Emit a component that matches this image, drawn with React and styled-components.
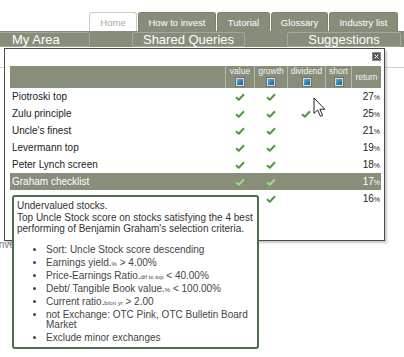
import React from "react";
import styled, { createGlobalStyle } from "styled-components";

const Global = createGlobalStyle`
  html, body { margin: 0; padding: 0; background: #fff; }
  body { font-family: "Liberation Sans", Arial, sans-serif; }
`;

const Page = styled.div`
  position: relative;
  width: 404px;
  height: 357px;
  overflow: hidden;
  background: #fff;
`;

const TabRow = styled.div`
  display: flex;
  justify-content: flex-end;
  align-items: flex-end;
  gap: 1px;
  height: 31px;
  padding-right: 6px;
  box-sizing: border-box;
`;

const Tab = styled.div`
  width: ${(p) => p.$w}px;
  height: 19px;
  box-sizing: border-box;
  display: flex;
  align-items: center;
  justify-content: center;
  font-size: 9.5px;
  border-radius: 3px 3px 0 0;
  border: 1px solid ${(p) => (p.$active ? "#c9ccc3" : "#7b836f")};
  border-bottom: none;
  background: ${(p) => (p.$active ? "#fff" : "#868e7a")};
  color: ${(p) => (p.$active ? "#a6aaa0" : "#fff")};
`;

const NavBar = styled.div`
  display: flex;
  align-items: center;
  height: 16px;
  background: #868e7a;
`;

const NavItem = styled.div`
  box-sizing: border-box;
  width: ${(p) => p.$w}px;
  margin-left: ${(p) => p.$ml || 0}px;
  height: 15px;
  display: flex;
  align-items: center;
  justify-content: ${(p) => (p.$left ? "flex-start" : "center")};
  padding-left: ${(p) => (p.$left ? 12 : 0)}px;
  font-size: 13px;
  color: #fff;
  border: 1px solid #a3a999;
  border-left: ${(p) => (p.$left ? "none" : "1px solid #a3a999")};
  border-radius: ${(p) => (p.$left ? "0 2px 2px 0" : "2px")};
`;

const BackLine = styled.div`
  margin-top: 20px;
  border-top: 1px solid #cfcfcf;
`;

const BackText = styled.div`
  margin-top: 171px;
  margin-left: -4px;
  font-size: 10px;
  color: #777;
`;

const Popup = styled.div`
  position: absolute;
  left: 4px;
  top: 48px;
  width: 381px;
  height: 193px;
  box-sizing: border-box;
  border: 1px solid #4a4a4a;
  box-shadow: 2px 2px 2px rgba(0, 0, 0, 0.22);
  background: #fff;
  padding: 0 3px 0 5px;
`;

const CloseRow = styled.div`
  height: 17px;
  display: flex;
  justify-content: flex-end;
  align-items: center;
`;

const CloseBtn = styled.div`
  width: 7px;
  height: 7px;
  margin-top: -2px;
  background: #555;
  border: 1px solid #888;
  display: flex;
  align-items: center;
  justify-content: center;
`;

const COLS = "215px 29px 33px 38px 26px 30px";

const HeaderRow = styled.div`
  display: grid;
  grid-template-columns: ${COLS};
  height: 22px;
  background: #878f7b;
`;

const HeadCell = styled.div`
  border-left: ${(p) => (p.$first ? "none" : "1px solid #b4b9ab")};
  display: flex;
  flex-direction: column;
  align-items: center;
  justify-content: ${(p) => (p.$center ? "center" : "flex-start")};
  font-size: 8.5px;
  line-height: 9px;
  color: #f3f3f3;
  padding-top: ${(p) => (p.$center ? 0 : 1)}px;
  box-sizing: border-box;
`;

const Box = styled.div`
  width: 6px;
  height: 6px;
  margin-top: 2px;
  border: 1px solid #d8dde0;
  background: linear-gradient(135deg, #5aa9e0, #1c5f9c);
  box-shadow: 0 0 0 1px #6d7565;
`;

const Row = styled.div`
  display: grid;
  grid-template-columns: ${COLS};
  height: 17px;
  align-items: center;
  background: ${(p) => (p.$sel ? "#878f7b" : "transparent")};
  color: ${(p) => (p.$sel ? "#fff" : "#222")};
  font-size: 10px;
`;

const NameCell = styled.div`
  padding-left: 2px;
`;

const CheckCell = styled.div`
  display: flex;
  justify-content: center;
  align-items: center;
`;

const ReturnCell = styled.div`
  text-align: right;
  padding-right: 1px;
`;

const Pct = styled.span`
  font-size: 7px;
`;

const Tooltip = styled.div`
  position: absolute;
  left: 12px;
  top: 195px;
  width: 247px;
  height: 154px;
  box-sizing: border-box;
  background: #fff;
  border: 2px solid #4d6c50;
  border-radius: 3px;
  padding: 3px 0 3px 3px;
  font-size: 10px;
  color: #333;
`;

const Intro = styled.div`
  line-height: 11.5px;
`;

const List = styled.ul`
  margin: 10px 0 0 0;
  padding-left: 29px;
  color: #444;
`;

const Item = styled.li`
  line-height: 10px;
  margin-bottom: 3px;
`;

const Unit = styled.span`
  font-size: 6px;
  line-height: 0;
`;

const Cursor = styled.svg`
  position: absolute;
  left: 313px;
  top: 97px;
`;

const Check = ({ sel }) => (
  <svg width="10" height="8" viewBox="0 0 10 8">
    <polyline
      points="1,4.2 3.8,6.8 9,1.2"
      fill="none"
      stroke={sel ? "#9fd98c" : "#4f9a3f"}
      strokeWidth="2"
      strokeLinejoin="round"
    />
  </svg>
);

const rows = [
  { name: "Piotroski top", c: [1, 1, 0, 0], r: 27 },
  { name: "Zulu principle", c: [1, 1, 1, 0], r: 25 },
  { name: "Uncle's finest", c: [1, 1, 0, 0], r: 21 },
  { name: "Levermann top", c: [1, 1, 0, 0], r: 19 },
  { name: "Peter Lynch screen", c: [1, 1, 0, 0], r: 18 },
  { name: "Graham checklist", c: [1, 1, 0, 0], r: 17, sel: true },
  { name: "", c: [0, 1, 0, 0], r: 16 },
];

const tabs = [
  { t: "Home", w: 48, active: true },
  { t: "How to invest", w: 78 },
  { t: "Tutorial", w: 53 },
  { t: "Glossary", w: 57 },
  { t: "Industry list", w: 69 },
];

export default function App() {
  return (
    <Page>
      <Global />
      <TabRow>
        {tabs.map((t) => (
          <Tab key={t.t} $w={t.w} $active={t.active}>
            {t.t}
          </Tab>
        ))}
      </TabRow>
      <NavBar>
        <NavItem $w={90} $left>My Area</NavItem>
        <NavItem $w={113} $ml={42}>Shared Queries</NavItem>
        <NavItem $w={114} $ml={42}>Suggestions</NavItem>
      </NavBar>
      <BackLine />
      <BackText>Inve</BackText>

      <Popup>
        <CloseRow>
          <CloseBtn>
            <svg width="5" height="5" viewBox="0 0 5 5">
              <path d="M0.5 0.5 L4.5 4.5 M4.5 0.5 L0.5 4.5" stroke="#fff" strokeWidth="1" />
            </svg>
          </CloseBtn>
        </CloseRow>
        <HeaderRow>
          <HeadCell $first />
          {["value", "growth", "dividend", "short"].map((h) => (
            <HeadCell key={h}>
              {h}
              <Box />
            </HeadCell>
          ))}
          <HeadCell $center>return</HeadCell>
        </HeaderRow>
        {rows.map((r, i) => (
          <Row key={i} $sel={r.sel}>
            <NameCell>{r.name}</NameCell>
            {r.c.map((c, j) => (
              <CheckCell key={j}>{c ? <Check sel={r.sel} /> : null}</CheckCell>
            ))}
            <ReturnCell>
              {r.r}
              <Pct>%</Pct>
            </ReturnCell>
          </Row>
        ))}
      </Popup>

      <Cursor width="14" height="21" viewBox="0 0 14 21">
        <path
          d="M1 1 L1 16.5 L4.6 13 L7.4 19.3 L9.6 18.3 L6.9 12.2 L11.8 12.2 Z"
          fill="#fff"
          stroke="#222"
          strokeWidth="1"
          strokeLinejoin="round"
        />
      </Cursor>

      <Tooltip>
        <Intro>
          Undervalued stocks.
          <br />
          Top Uncle Stock score on stocks satisfying the 4 best performing of Benjamin
          Graham's selection criteria.
        </Intro>
        <List>
          <Item>Sort: Uncle Stock score descending</Item>
          <Item>
            Earnings yield.<Unit>%</Unit> &gt; 4.00%
          </Item>
          <Item>
            Price-Earnings Ratio.<Unit>dif to top</Unit> &lt; 40.00%
          </Item>
          <Item>
            Debt/ Tangible Book value.<Unit>%</Unit> &lt; 100.00%
          </Item>
          <Item>
            Current ratio.<Unit>b/on yr</Unit> &gt; 2.00
          </Item>
          <Item>not Exchange: OTC Pink, OTC Bulletin Board Market</Item>
          <Item>Exclude minor exchanges</Item>
        </List>
      </Tooltip>
    </Page>
  );
}
